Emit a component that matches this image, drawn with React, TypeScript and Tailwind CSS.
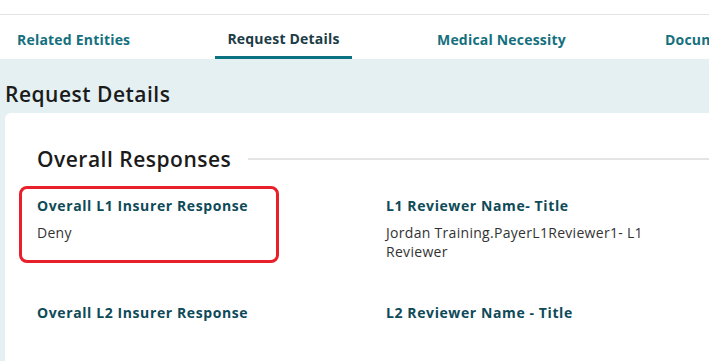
import React from "react";

const font = { fontFamily: "'Open Sans', Lato, sans-serif" };

export default function App() {
  return (
    <div className="w-[709px] h-[361px] overflow-hidden bg-white" style={font}>
      <div className="h-[15px] border-b border-[#e3e3e3]" />
      <div className="h-[44px] flex items-stretch whitespace-nowrap text-[14px] font-bold tracking-[0.2px]">
        <div className="w-[17px] shrink-0" />
        <div className="w-[198px] shrink-0 flex items-center pt-[5px] text-[#15707e]">Related Entities</div>
        <div className="w-[137px] shrink-0 flex flex-col items-center">
          <div className="flex-1 flex items-center pt-[5px] text-[#1c3c46]">Request Details</div>
          <div className="h-[3px] w-full bg-[#0b7281]" />
        </div>
        <div className="w-[85px] shrink-0" />
        <div className="w-[228px] shrink-0 flex items-center pt-[5px] text-[#15707e]">Medical Necessity</div>
        <div className="flex-1 min-w-0 overflow-hidden flex items-center pt-[5px] text-[#15707e]">Documents</div>
      </div>
      <div className="bg-[#e4f0f2] pl-[5px] pt-[22px] h-[302px]">
        <h1 className="text-[21px] font-semibold text-[#1b1b1b] leading-[26px] tracking-[0.5px]">Request Details</h1>
        <div className="mt-[6px] bg-white rounded-tl-[6px] h-[260px] pt-[33px]">
          <div className="flex items-center pl-[32px]">
            <h2 className="text-[21px] font-semibold text-[#1b1b1b] leading-[26px] tracking-[0.5px] whitespace-nowrap">Overall Responses</h2>
            <div className="flex-1 h-[2px] bg-[#e4e4e4] ml-[17px]" />
          </div>
          <div className="flex mt-[14px] pl-[14px]">
            <div className="w-[260px] h-[77px] border-[3px] border-[#e8202a] rounded-[8px] pl-[15px] pt-[7px]">
              <div className="text-[14px] font-bold text-[#0e4a58] leading-[20px] tracking-[0.6px] whitespace-nowrap">Overall L1 Insurer Response</div>
              <div className="text-[14px] text-[#333] leading-[20px] tracking-[0.3px] mt-[7px]">Deny</div>
            </div>
            <div className="ml-[107px] pt-[10px] w-[310px]">
              <div className="text-[14px] font-bold text-[#0e4a58] leading-[20px] tracking-[0.6px] whitespace-nowrap">L1 Reviewer Name- Title</div>
              <div className="text-[14px] text-[#333] leading-[19px] tracking-[0.3px] mt-[7px] w-[300px]">Jordan Training.PayerL1Reviewer1- L1 Reviewer</div>
            </div>
          </div>
          <div className="flex mt-[40px] pl-[32px]">
            <div className="w-[349px] text-[14px] font-bold text-[#0e4a58] leading-[20px] tracking-[0.6px] whitespace-nowrap">Overall L2 Insurer Response</div>
            <div className="text-[14px] font-bold text-[#0e4a58] leading-[20px] tracking-[0.6px] whitespace-nowrap">L2 Reviewer Name - Title</div>
          </div>
        </div>
      </div>
    </div>
  );
}
